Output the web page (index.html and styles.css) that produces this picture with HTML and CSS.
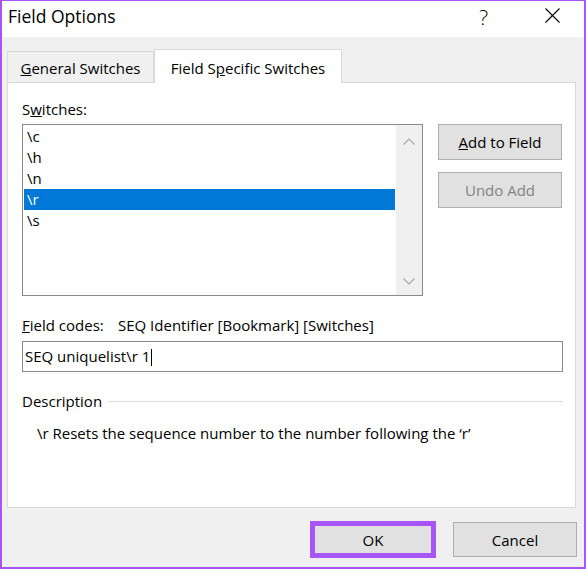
FILE: index.html
```html
<!DOCTYPE html>
<html>
<head>
<meta charset="utf-8">
<title>Field Options</title>
<link rel="stylesheet" href="styles.css">
</head>
<body>
<div class="window">
  <div class="titlebar">
    <div class="title">Field Options</div>
    <div class="help">?</div>
    <div class="close">
      <svg width="15" height="15" viewBox="0 0 15 15"><path d="M0.5 0.5 L14.5 14.5 M14.5 0.5 L0.5 14.5" stroke="#000" stroke-width="1.1" fill="none"/></svg>
    </div>
  </div>
  <div class="tabs">
    <div class="tab"><u>G</u>eneral Switches</div>
    <div class="tab active">Field S<u>p</u>ecific Switches</div>
  </div>
  <div class="panel">
    <div class="label">S<u>w</u>itches:</div>
    <div class="switch-row">
      <div class="listbox">
        <ul class="items">
          <li>\c</li>
          <li>\h</li>
          <li>\n</li>
          <li class="sel">\r</li>
          <li>\s</li>
        </ul>
        <div class="scrollbar">
          <svg width="12" height="7" viewBox="0 0 12 7"><path d="M0.5 6.5 L6 1 L11.5 6.5" stroke="#a6a6a6" stroke-width="1.2" fill="none"/></svg>
          <svg width="12" height="7" viewBox="0 0 12 7"><path d="M0.5 0.5 L6 6 L11.5 0.5" stroke="#a6a6a6" stroke-width="1.2" fill="none"/></svg>
        </div>
      </div>
      <div class="side-buttons">
        <button class="btn"><u>A</u>dd to Field</button>
        <button class="btn disabled">Undo Add</button>
      </div>
    </div>
    <div class="codes-line"><span class="codes-label"><u>F</u>ield codes:</span><span>SEQ Identifier [Bookmark] [Switches]</span></div>
    <div class="codes-input">SEQ uniquelist\r 1<span class="caret"></span></div>
    <div class="desc-head"><span>Description</span><span class="rule"></span></div>
    <div class="desc-text">\r Resets the sequence number to the number following the ‘r’</div>
  </div>
  <div class="footer">
    <button class="btn dlg ok">OK</button>
    <button class="btn dlg">Cancel</button>
  </div>
</div>
</body>
</html>
```
FILE: styles.css
```css
* { box-sizing: border-box; }
html, body { margin: 0; padding: 0; }
body {
  font-family: "Open Sans", "Noto Sans", sans-serif;
  font-size: 15px;
  color: #000;
  background: #fff;
}
.window {
  width: 586px;
  height: 569px;
  border: 2px solid #a855f7;
  border-top-width: 1px;
  background: #f0f0f0;
  display: flex;
  flex-direction: column;
}
.titlebar {
  height: 36px;
  background: #fff;
  display: flex;
  align-items: flex-start;
  flex-shrink: 0;
}
.title {
  font-size: 17.5px;
  line-height: 24px;
  margin: 3px 0 0 6px;
  flex: 1;
}
.help {
  font-size: 21px;
  line-height: 28px;
  font-weight: 300;
  margin: 2px 57px 0 0;
}
.close {
  margin: 7px 24px 0 0;
  width: 15px;
  height: 15px;
}
.close svg { display: block; }
.tabs {
  display: flex;
  align-items: flex-end;
  padding: 12px 0 0 5px;
  flex-shrink: 0;
}
.tab {
  width: 147px;
  height: 31px;
  border: 1px solid #d9d9d9;
  border-bottom: none;
  line-height: 20px;
  padding-top: 6px;
  text-align: center;
  background: #f0f0f0;
}
.tab.active {
  width: 188px;
  height: 34px;
  padding-top: 8px;
  margin-bottom: -1px;
  background: #fff;
  position: relative;
  z-index: 1;
}
.panel {
  margin: 0 8px 0 5px;
  height: 426px;
  background: #fff;
  border: 1px solid #d9d9d9;
  padding: 16px 12px 0 14px;
  flex-shrink: 0;
}
.label { line-height: 20px; }
.switch-row {
  display: flex;
  margin-top: 5px;
  height: 172px;
}
.listbox {
  width: 401px;
  height: 172px;
  border: 1px solid #8a8a8a;
  display: flex;
  background: #fff;
}
.items {
  list-style: none;
  margin: 0;
  padding: 1px;
  flex: 1;
}
.items li {
  height: 21px;
  line-height: 21px;
  padding-left: 3px;
}
.items li.sel {
  background: #0078d7;
  color: #fff;
}
.scrollbar {
  width: 26px;
  background: #f0f0f0;
  display: flex;
  flex-direction: column;
  align-items: center;
  justify-content: space-between;
  padding: 13px 0 10px;
}
.scrollbar svg { display: block; }
.side-buttons {
  margin-left: 15px;
  width: 124px;
  display: flex;
  flex-direction: column;
  gap: 12px;
}
.btn {
  font: inherit;
  font-size: 15px;
  color: #000;
  height: 36px;
  background: #e1e1e1;
  border: 1px solid #adadad;
  padding: 0;
  margin: 0;
}
.btn.disabled { color: #838383; }
.codes-line {
  margin-top: 19px;
  line-height: 20px;
}
.codes-label {
  display: inline-block;
  width: 96px;
}
.codes-input {
  margin-top: 6px;
  height: 31px;
  border: 1px solid #8a8a8a;
  padding-left: 2px;
  line-height: 29px;
}
.caret {
  display: inline-block;
  width: 1px;
  height: 17px;
  background: #000;
  margin-left: 1px;
  vertical-align: -4px;
}
.desc-head {
  margin-top: 19px;
  display: flex;
  align-items: center;
  line-height: 20px;
}
.rule {
  flex: 1;
  height: 1px;
  background: #dcdcdc;
  margin-left: 6px;
}
.desc-text {
  margin-top: 12px;
  padding-left: 15px;
  line-height: 20px;
}
.footer {
  display: flex;
  justify-content: flex-end;
  gap: 18px;
  padding: 14px 7px 0 0;
}
.dlg {
  width: 124px;
  height: 35px;
}
.ok {
  outline: 5px solid #a855f7;
  outline-offset: -4px;
}
```
